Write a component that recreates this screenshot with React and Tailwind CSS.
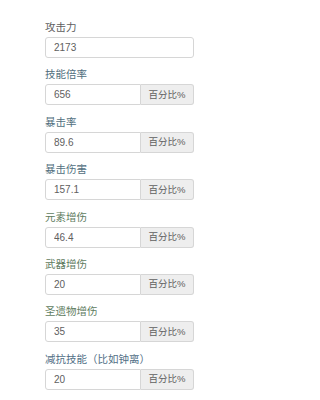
import React from 'react';

const fields = [
  { label: '攻击力', value: '2173', color: 'text-[#5e5e5e]', pct: false },
  { label: '技能倍率', value: '656', color: 'text-[#52707e]', pct: true },
  { label: '暴击率', value: '89.6', color: 'text-[#52707e]', pct: true },
  { label: '暴击伤害', value: '157.1', color: 'text-[#52707e]', pct: true },
  { label: '元素增伤', value: '46.4', color: 'text-[#607c60]', pct: true },
  { label: '武器增伤', value: '20', color: 'text-[#607c60]', pct: true },
  { label: '圣遗物增伤', value: '35', color: 'text-[#607c60]', pct: true },
  { label: '减抗技能（比如钟离）', value: '20', color: 'text-[#527086]', pct: true },
];

const Field = ({ label, value, color, pct }) => (
  <div className="flex flex-col">
    <label className={`h-[14px] leading-[14px] text-[10.5px] mb-[3px] ${color}`}>{label}</label>
    <div className="flex h-[21px] w-[149px]">
      <input
        readOnly
        value={value}
        className={`flex-1 min-w-0 h-full border border-[#d6d6d6] bg-white px-[8px] text-[10px] text-[#606060] outline-none ${pct ? 'rounded-l-[3px]' : 'rounded-[3px]'}`}
      />
      {pct && (
        <span className="w-[53px] h-full flex items-center justify-center border border-l-0 border-[#d6d6d6] bg-[#eeeeee] rounded-r-[3px] text-[9.5px] text-[#606060]">
          百分比%
        </span>
      )}
    </div>
  </div>
);

export default function App() {
  return (
    <div
      className="w-[240px] h-[400px] bg-white pt-[20px] pl-[45px]"
      style={{ fontFamily: '"Liberation Sans", "Noto Sans CJK SC", sans-serif' }}
    >
      <div className="flex flex-col gap-[9.4px]">
        {fields.map((f) => (
          <Field key={f.label} {...f} />
        ))}
      </div>
    </div>
  );
}
